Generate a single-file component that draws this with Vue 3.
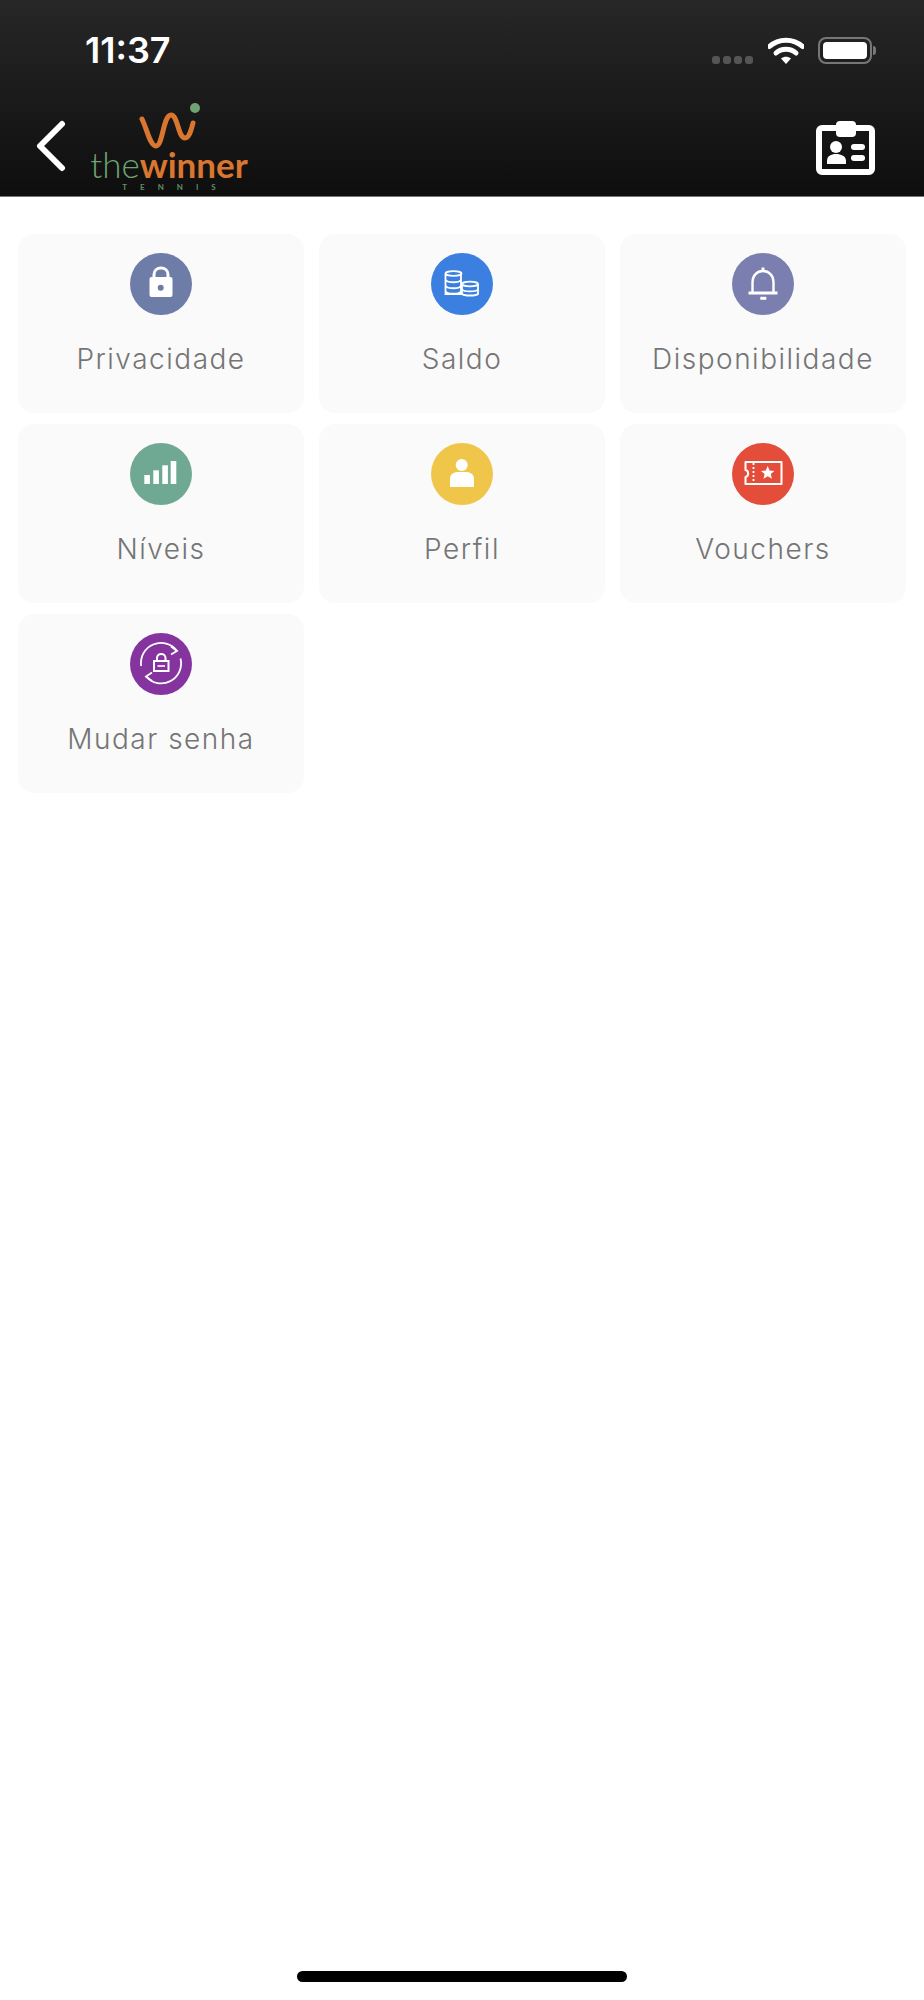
<script setup>
const items = [
  { label: 'Privacidade', color: '#6e7ca8', icon: 'lock' },
  { label: 'Saldo', color: '#3b80e0', icon: 'coins' },
  { label: 'Disponibilidade', color: '#7a7fb0', icon: 'bell' },
  { label: 'Níveis', color: '#6fa893', icon: 'bars' },
  { label: 'Perfil', color: '#f0c64a', icon: 'user' },
  { label: 'Vouchers', color: '#e44d3a', icon: 'ticket' },
  { label: 'Mudar senha', color: '#85349f', icon: 'relock' },
]
</script>

<template>
  <div class="page">
    <header class="top">
      <div class="status">
        <span class="time">11:37</span>
        <div class="status-right">
          <div class="signal"><i></i><i></i><i></i><i></i></div>
          <svg class="wifi" width="36" height="27" viewBox="0 0 36 27">
            <path d="M1.5 9.5C10.5 1 25.5 1 34.5 9.5" fill="none" stroke="#fff" stroke-width="5" stroke-linecap="round" />
            <path d="M8 16C13.5 11 22.5 11 28 16" fill="none" stroke="#fff" stroke-width="5" stroke-linecap="round" />
            <path d="M13 21.5C16 19 20 19 23 21.5L18 27Z" fill="#fff" />
          </svg>
          <div class="battery"><div class="battery-fill"></div></div>
          <div class="battery-nub"></div>
        </div>
      </div>
      <div class="toolbar">
        <svg class="back" width="30" height="52" viewBox="0 0 30 52">
          <path d="M26 4L4 26L26 48" fill="none" stroke="#fff" stroke-width="6" stroke-linecap="round" stroke-linejoin="round" />
        </svg>
        <div class="logo">
          <svg class="logo-mark" width="64" height="46" viewBox="0 0 64 46">
            <path d="M3 16C8 26 11 43 17 43C24 43 24 12 32 12C39 12 39 35 46 35C50 35 52 28 54 20" fill="none" stroke="#d9762f" stroke-width="5" stroke-linecap="round" />
            <circle cx="56" cy="5" r="5" fill="#6fa373" />
          </svg>
          <div class="logo-word"><span class="logo-the">the</span><span class="logo-winner">winner</span></div>
          <div class="logo-tennis">TENNIS</div>
        </div>
        <svg class="badge" width="60" height="54" viewBox="0 0 60 54">
          <rect x="3" y="7" width="53" height="44" rx="3" fill="none" stroke="#fff" stroke-width="6" />
          <rect x="20" y="0" width="20" height="16" rx="4" fill="#fff" />
          <circle cx="20" cy="26" r="6" fill="#fff" />
          <path d="M11 43V40C11 35 15 33 20 33C25 33 30 35 30 40V43Z" fill="#fff" />
          <rect x="35" y="23" width="14" height="6" rx="3" fill="#fff" />
          <rect x="35" y="34" width="14" height="6" rx="3" fill="#fff" />
        </svg>
      </div>
    </header>

    <main class="grid">
      <div v-for="item in items" :key="item.label" class="card">
        <div class="circle" :style="{ background: item.color }">
          <svg width="62" height="62" viewBox="0 0 62 62">
            <g v-if="item.icon === 'lock'">
              <path d="M24 25V21.5C24 17.5 27 15 31 15C35 15 38 17.5 38 21.5V25" fill="none" stroke="#fff" stroke-width="3" />
              <rect x="19.5" y="24" width="23" height="20" rx="2" fill="#fff" />
              <circle cx="30.7" cy="34.7" r="3" :fill="item.color" />
            </g>
            <g v-else-if="item.icon === 'coins'" fill="none" stroke="#fff" stroke-width="1.8">
              <path d="M14.5 20.5V41H30V20.5" />
              <ellipse cx="22.5" cy="20.5" rx="8" ry="2.4" />
              <path d="M14.5 27C17 30 28 30 30 27M14.5 33C17 36 28 36 30 33M14.5 38.5C17 41.5 28 41.5 30 38.5" />
              <path d="M31 31V41C33 43 45 43 47 41V31" />
              <ellipse cx="39" cy="31" rx="8" ry="2.4" />
              <path d="M31 36.5C33 39 45 39 47 36.5" />
            </g>
            <g v-else-if="item.icon === 'bell'">
              <path d="M20.5 39.5V29C20.5 22.5 25 18 31 18C37 18 41.5 22.5 41.5 29V39.5" fill="none" stroke="#fff" stroke-width="2.4" />
              <rect x="29.5" y="14.5" width="3" height="4" fill="#fff" />
              <rect x="16.5" y="38.5" width="29" height="3" fill="#fff" />
              <rect x="28.3" y="43.8" width="6" height="3" fill="#fff" />
            </g>
            <g v-else-if="item.icon === 'bars'" fill="#fff">
              <rect x="14.3" y="32" width="5.6" height="9" />
              <rect x="23.3" y="27.3" width="5.6" height="13.7" />
              <rect x="32.3" y="22.3" width="5.6" height="18.7" />
              <rect x="40.7" y="18" width="5.6" height="23" />
            </g>
            <g v-else-if="item.icon === 'user'" fill="#fff">
              <circle cx="30.7" cy="22" r="6" />
              <path d="M19 44V36C19 31 23 29 27 29H35C39 29 43 31 43 36V44Z" />
            </g>
            <g v-else-if="item.icon === 'ticket'">
              <path d="M13.5 19H49.5V41H13.5V34C17 33.5 17 27.5 13.5 27Z" fill="none" stroke="#fff" stroke-width="2" stroke-linejoin="round" />
              <path d="M21.5 20V40" fill="none" stroke="#fff" stroke-width="1.8" stroke-dasharray="2 2" />
              <path d="M35.7 23L37.6 27.6L42.4 28L38.8 31.1L39.9 35.8L35.7 33.3L31.5 35.8L32.6 31.1L29 28L33.8 27.6Z" fill="#fff" />
            </g>
            <g v-else fill="none" stroke="#fff" stroke-width="1.8">
              <path d="M11.2 33A20 20 0 0 1 47 18" />
              <path d="M41 13.5L47 18L41 21.5" />
              <path d="M50.5 25.5A20 20 0 0 1 16 43.5" />
              <path d="M22 39.5L16 43.5L22 48" />
              <rect x="24" y="28" width="14.5" height="10" stroke-width="2" />
              <path d="M27 28V25C27 22.5 29 21 31.2 21C33.4 21 35.5 22.5 35.5 25V28" stroke-width="2" />
              <path d="M27.5 33H35" stroke-width="1.6" />
            </g>
          </svg>
        </div>
        <div class="label">{{ item.label }}</div>
      </div>
    </main>

    <div class="home-bar"></div>
  </div>
</template>

<style scoped>
.page {
  min-height: 2000px;
  display: flex;
  flex-direction: column;
  background: #fff;
  font-family: Inter, "Liberation Sans", sans-serif;
  box-sizing: border-box;
}
.top {
  height: 197px;
  box-sizing: border-box;
  border-bottom: 1px solid #777;
  background: linear-gradient(#272727, #0e0e0e);
  display: flex;
  flex-direction: column;
}
.status {
  height: 100px;
  display: flex;
  justify-content: space-between;
  align-items: center;
  padding: 0 48px 0 85px;
}
.time {
  color: #fff;
  font-size: 36px;
  font-weight: 600;
  line-height: 40px;
}
.status-right {
  display: flex;
  align-items: center;
}
.signal {
  display: flex;
  gap: 3px;
  margin-top: 19px;
  margin-right: 15px;
}
.signal i {
  width: 8px;
  height: 8px;
  border-radius: 3px;
  background: #555;
}
.battery {
  width: 54px;
  height: 27px;
  margin-left: 14px;
  padding: 3px;
  box-sizing: border-box;
  border: 2px solid #777;
  border-radius: 8px;
}
.battery-fill {
  height: 100%;
  background: #fff;
  border-radius: 4px;
}
.battery-nub {
  width: 3px;
  height: 9px;
  margin-left: 1px;
  background: #777;
  border-radius: 0 3px 3px 0;
}
.toolbar {
  flex: 1;
  display: flex;
  align-items: center;
  padding: 0 48px 0 36px;
}
.back {
  margin-top: -5px;
}
.logo {
  width: 160px;
  margin-left: 23px;
  margin-top: -2px;
  display: flex;
  flex-direction: column;
  align-items: center;
}
.logo-mark {
  display: block;
  margin-left: 4px;
}
.logo-word {
  display: flex;
  font-family: Lato, sans-serif;
  font-size: 35px;
  line-height: 30px;
  height: 30px;
}
.logo-the {
  font-weight: 300;
  color: #6fa373;
}
.logo-winner {
  font-weight: 700;
  color: #d9762f;
}
.logo-tennis {
  margin-top: 3px;
  font-family: Lato, sans-serif;
  font-size: 8px;
  font-weight: 700;
  line-height: 10px;
  letter-spacing: 13px;
  margin-right: -13px;
  color: #5f8f64;
}
.badge {
  margin-left: auto;
}
.grid {
  display: grid;
  grid-template-columns: repeat(3, 286px);
  column-gap: 15px;
  row-gap: 11px;
  padding: 37px 18px 0;
}
.card {
  height: 179px;
  background: #fafafa;
  border-radius: 16px;
  padding-top: 19px;
  box-sizing: border-box;
  display: flex;
  flex-direction: column;
  align-items: center;
}
.circle {
  width: 62px;
  height: 62px;
  border-radius: 50%;
}
.circle svg {
  display: block;
}
.label {
  margin-top: 26px;
  color: #757575;
  font-size: 28px;
  font-weight: 300;
  line-height: 36px;
  letter-spacing: 1.5px;
}
.home-bar {
  margin: auto auto 18px;
  width: 330px;
  height: 11px;
  border-radius: 6px;
  background: #000;
}
</style>
